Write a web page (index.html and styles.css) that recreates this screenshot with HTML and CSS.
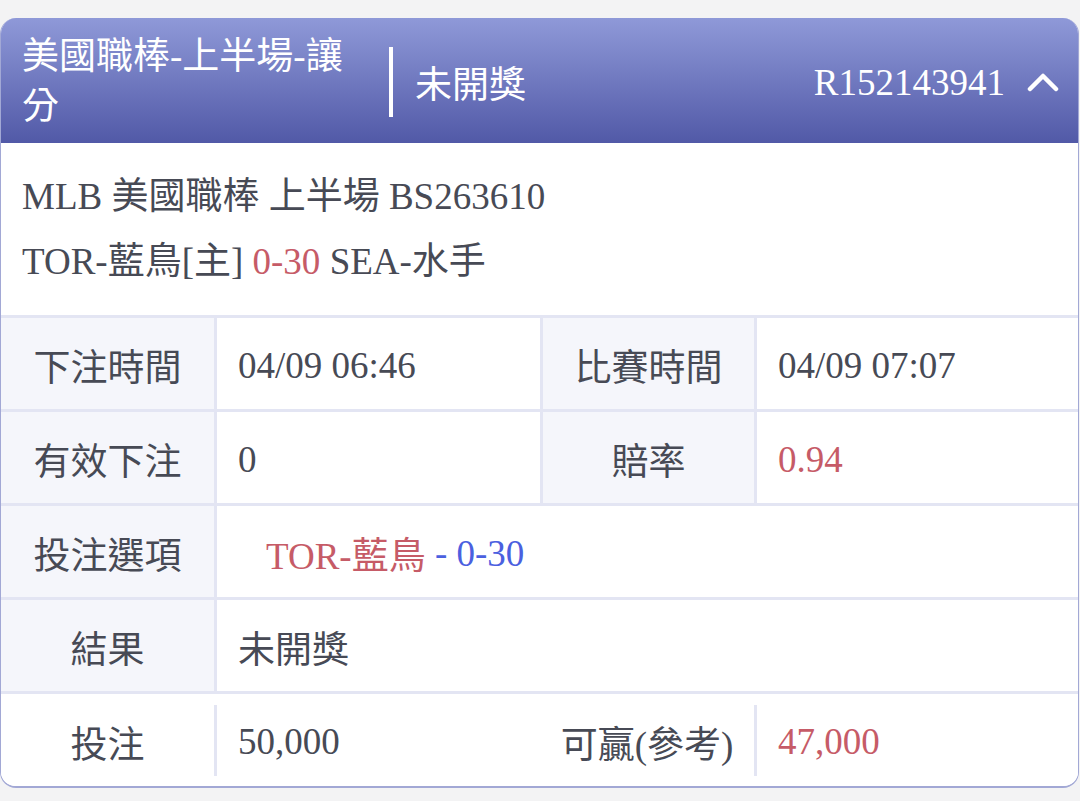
FILE: index.html
```html
<!DOCTYPE html>
<html lang="zh-Hant">
<head>
    <meta charset="UTF-8">
    <meta name="viewport" content="width=device-width, initial-scale=1.0">
    <title>注單詳情</title>
    <link rel="stylesheet" href="styles.css">
</head>
<body>
    <div class="card">
        <div class="card-header">
            <div class="title">美國職棒-上半場-讓分</div>
            <div class="divider"></div>
            <div class="status">未開獎</div>
            <div class="order-no">R152143941</div>
            <svg class="chevron" width="32" height="21" viewBox="0 0 32 21">
                <polyline points="3,18 16,5 29,18" fill="none" stroke="#fff" stroke-width="4.5" stroke-linecap="round" stroke-linejoin="round"/>
            </svg>
        </div>

        <div class="match">
            <div>MLB 美國職棒 上半場 BS263610</div>
            <div>TOR-藍鳥[主] <span class="red">0-30</span> SEA-水手</div>
        </div>

        <div class="info">
            <div class="label">下注時間</div>
            <div class="value">04/09 06:46</div>
            <div class="label">比賽時間</div>
            <div class="value">04/09 07:07</div>

            <div class="label">有效下注</div>
            <div class="value">0</div>
            <div class="label">賠率</div>
            <div class="value red">0.94</div>

            <div class="label">投注選項</div>
            <div class="value wide"><span class="pick red">TOR-藍鳥</span><span class="blue">&nbsp;-&nbsp;0-30</span></div>

            <div class="label">結果</div>
            <div class="value wide">未開獎</div>
        </div>

        <div class="footer-row">
            <div class="label plain">投注</div>
            <div class="sep"></div>
            <div class="value">50,000</div>
            <div class="label plain">可贏(參考)</div>
            <div class="sep"></div>
            <div class="value red">47,000</div>
        </div>
    </div>
</body>
</html>
```

FILE: styles.css
```css
body {
    margin: 0;
    padding: 18px 0 0 0;
    background-color: #f3f3f4;
    font-family: "Liberation Serif", "Noto Sans CJK TC", serif;
    color: #474a55;
}

.card {
    width: 1079px;
    box-sizing: border-box;
    background: white;
    border: 1px solid #a2a8d5;
    border-bottom-width: 2px;
    border-top: none;
    border-radius: 16px;
    overflow: hidden;
}

.card-header {
    height: 125px;
    box-sizing: border-box;
    padding: 3px 19px 0 21px;
    display: flex;
    align-items: center;
    color: white;
    background: linear-gradient(to bottom, #8f99d8, #5159a7);
    font-size: 37px;
}

.title {
    flex: 0 0 340px;
    line-height: 50px;
    align-self: flex-start;
    margin-top: 11px;
}

.divider {
    width: 4px;
    height: 70px;
    background: white;
    margin-left: 27px;
}

.status {
    margin-left: 22px;
    flex: 1;
}

.order-no {
    margin-right: 22px;
}

.chevron {
    margin-top: -2px;
}

.match {
    padding: 21px 21px 21px 21px;
    font-size: 37px;
    line-height: 65px;
}

.red {
    color: #c65b67;
}

.blue {
    color: #4b60df;
}

.info {
    display: grid;
    grid-template-columns: 213px 323px 211px 1fr;
    grid-auto-rows: 91px;
    gap: 3px;
    padding-top: 3px;
    background: #e3e5f3;
    font-size: 37px;
}

.label {
    background: #f5f6fb;
    display: flex;
    align-items: center;
    justify-content: center;
    padding-top: 3px;
}

.value {
    background: white;
    display: flex;
    align-items: center;
    padding-left: 21px;
    padding-top: 3px;
}

.wide {
    grid-column: 2 / 5;
}

.pick {
    padding-left: 28px;
}

.footer-row {
    display: flex;
    align-items: center;
    height: 92px;
    border-top: 3px solid #e3e5f3;
    font-size: 37px;
}

.footer-row .label {
    height: 100%;
    box-sizing: border-box;
}

.footer-row .label:first-child {
    width: 213px;
}

.footer-row .label.plain {
    background: white;
}

.footer-row .label:nth-child(4) {
    width: 214px;
}

.footer-row .value {
    height: 100%;
    width: 323px;
    padding-left: 21px;
    box-sizing: border-box;
}

.footer-row .value:last-child {
    flex: 1;
}

.sep {
    width: 3px;
    height: 71px;
    background: #e3e5f3;
}
```
